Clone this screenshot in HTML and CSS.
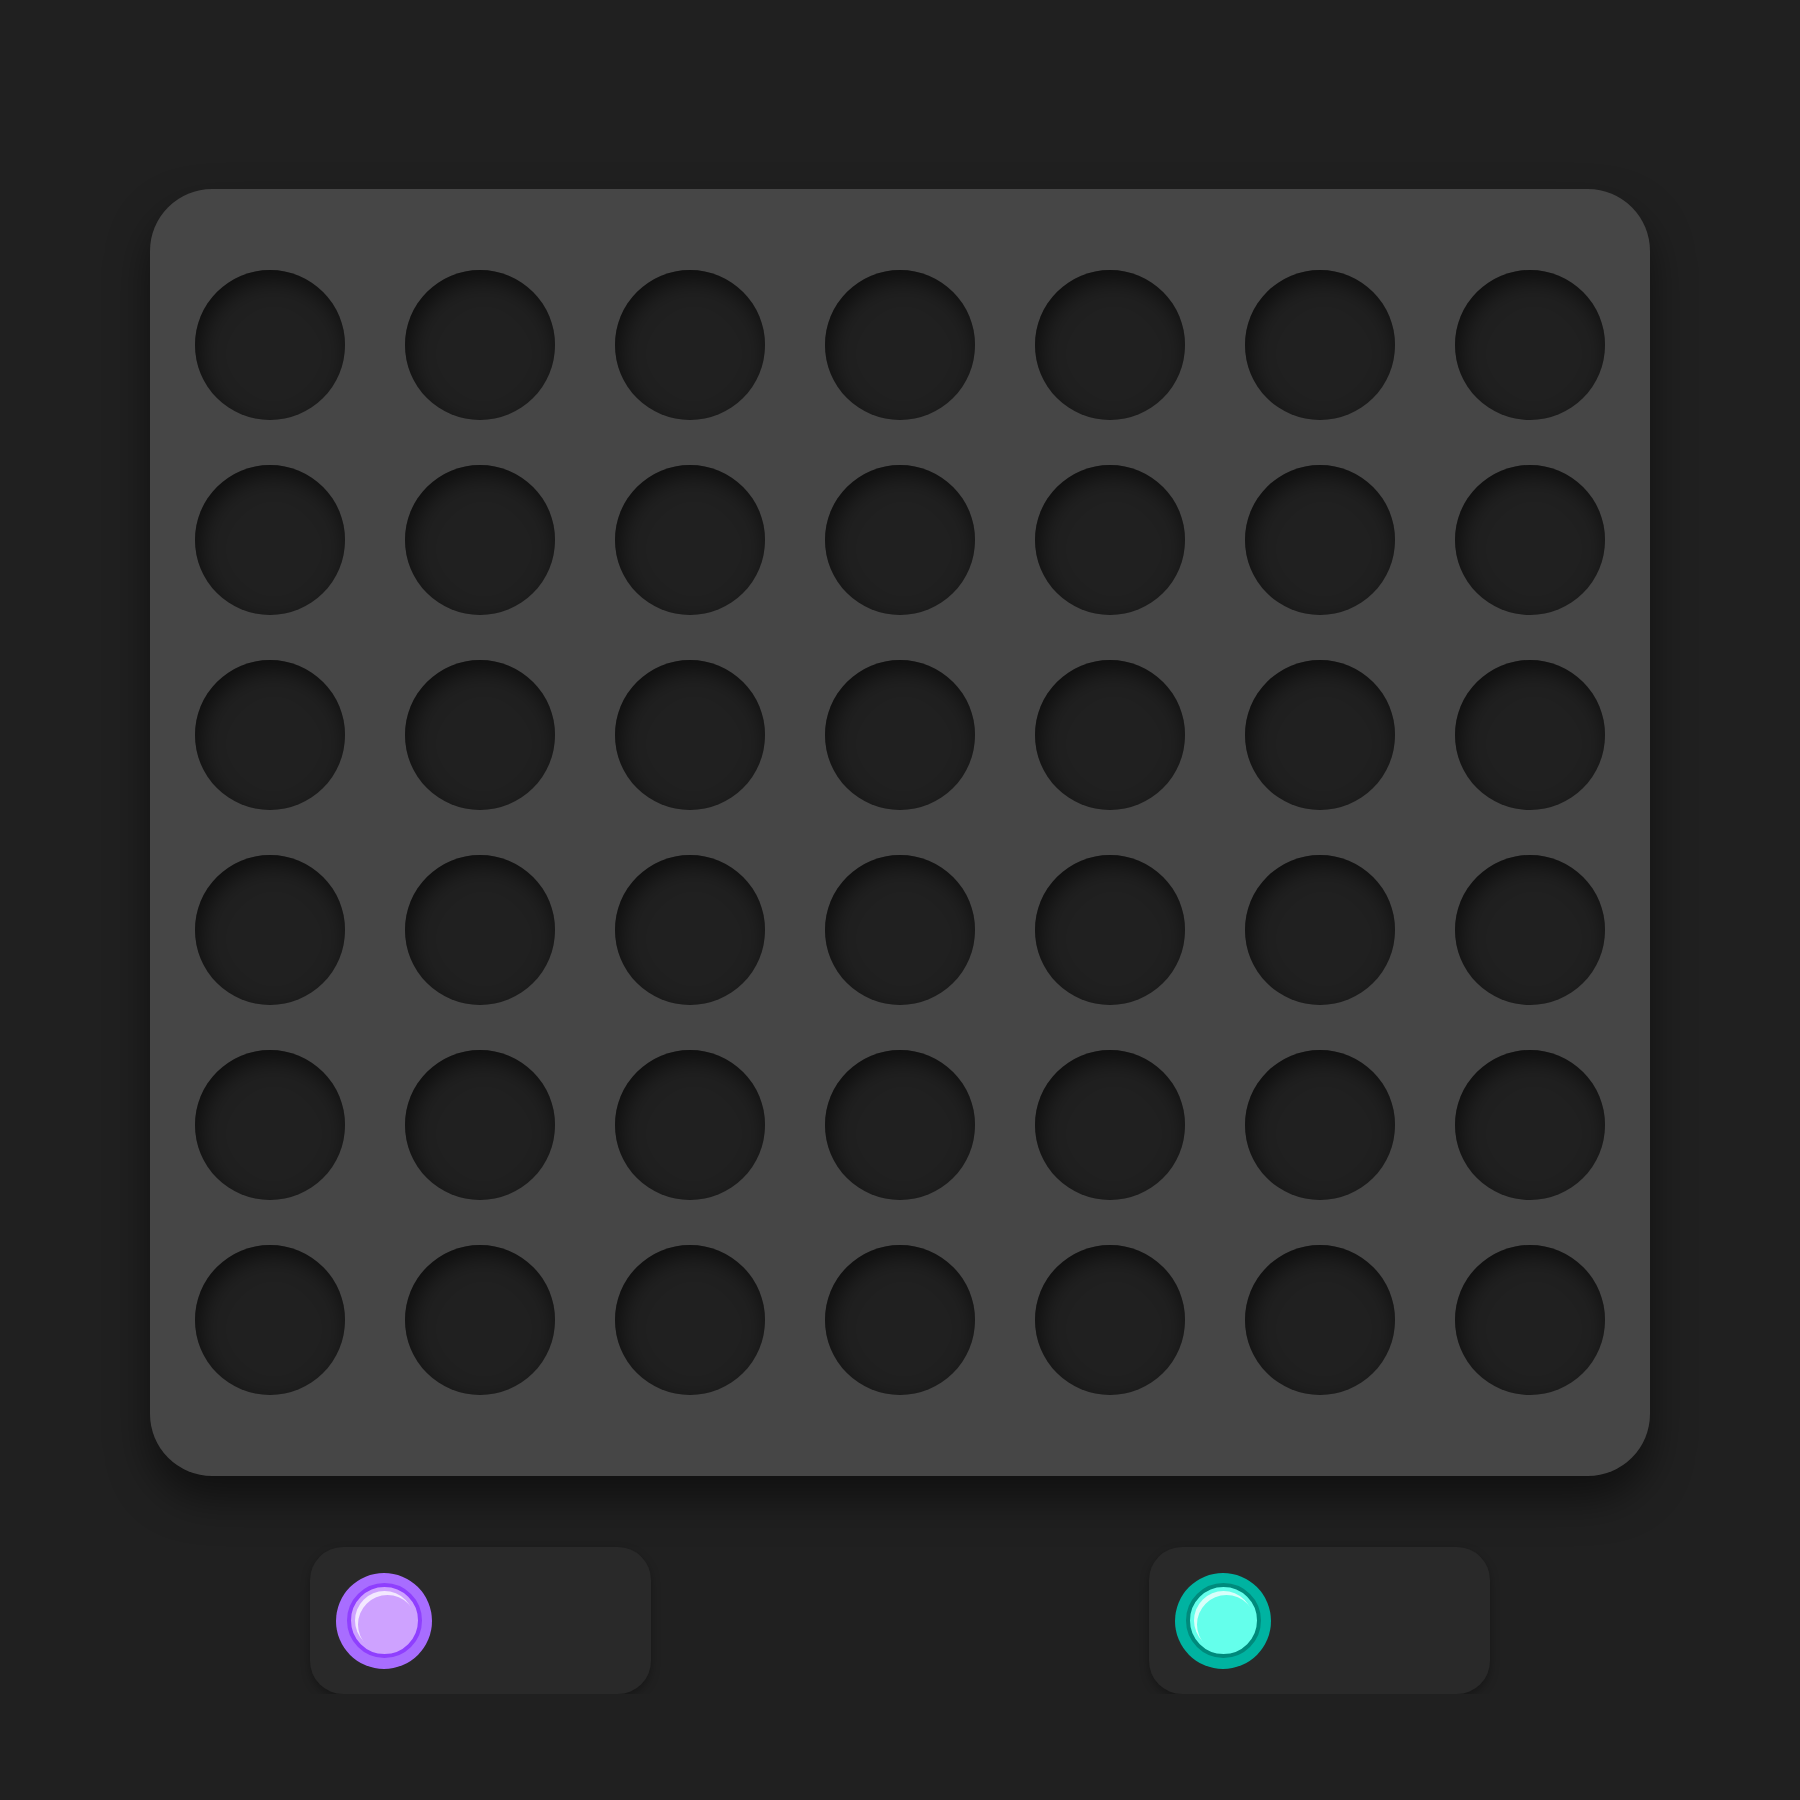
FILE: index.html
```html
<!DOCTYPE html>
<html lang="en">
<head>
<meta charset="utf-8">
<title>Connect Four</title>
<link rel="stylesheet" href="styles.css">
</head>
<body>
<main class="game">
  <div class="board">
    <div class="hole"></div><div class="hole"></div><div class="hole"></div><div class="hole"></div><div class="hole"></div><div class="hole"></div><div class="hole"></div>
    <div class="hole"></div><div class="hole"></div><div class="hole"></div><div class="hole"></div><div class="hole"></div><div class="hole"></div><div class="hole"></div>
    <div class="hole"></div><div class="hole"></div><div class="hole"></div><div class="hole"></div><div class="hole"></div><div class="hole"></div><div class="hole"></div>
    <div class="hole"></div><div class="hole"></div><div class="hole"></div><div class="hole"></div><div class="hole"></div><div class="hole"></div><div class="hole"></div>
    <div class="hole"></div><div class="hole"></div><div class="hole"></div><div class="hole"></div><div class="hole"></div><div class="hole"></div><div class="hole"></div>
    <div class="hole"></div><div class="hole"></div><div class="hole"></div><div class="hole"></div><div class="hole"></div><div class="hole"></div><div class="hole"></div>
  </div>
  <div class="players">
    <div class="player">
      <div class="chip chip-purple"><div class="chip-face"></div></div>
    </div>
    <div class="player">
      <div class="chip chip-teal"><div class="chip-face"></div></div>
    </div>
  </div>
</main>
</body>
</html>
```

FILE: styles.css
```css
html, body {
  margin: 0;
  padding: 0;
  background: #202020;
  font-family: "Liberation Sans", Arial, sans-serif;
}

.game {
  padding-top: 189px;
}

.board {
  width: 1500px;
  box-sizing: border-box;
  margin: 0 auto;
  display: grid;
  grid-template-columns: repeat(7, 150px);
  gap: 45px 60px;
  padding: 81px 45px;
  background: #464646;
  border-radius: 62px;
  box-shadow: 0 22px 40px rgba(0, 0, 0, 0.5);
}

.hole {
  width: 150px;
  height: 150px;
  border-radius: 50%;
  background: #202020;
  box-shadow: inset 4px 9px 22px rgba(0, 0, 0, 0.6);
}

.players {
  width: 1180px;
  margin: 71px auto 0;
  display: flex;
  justify-content: space-between;
}

.player {
  width: 341px;
  height: 147px;
  box-sizing: border-box;
  padding-left: 26px;
  display: flex;
  align-items: center;
  background: #292929;
  border-radius: 33px;
  box-shadow: 0 4px 10px rgba(0, 0, 0, 0.3);
}

.chip {
  width: 96px;
  height: 96px;
  border-radius: 50%;
  display: flex;
  align-items: center;
  justify-content: center;
}

.chip-face {
  width: 75px;
  height: 75px;
  box-sizing: border-box;
  border-radius: 50%;
  border: 4px solid;
  position: relative;
}

.chip-face::after {
  content: "";
  position: absolute;
  left: 4px;
  top: 4px;
  width: 59px;
  height: 59px;
  border-radius: 50%;
  box-shadow: inset 3px 4px 0 rgba(255, 255, 255, 0.75);
}

.chip-purple {
  background: #a86dff;
}

.chip-purple .chip-face {
  border-color: #8f3ffe;
  background: #cea2ff;
}

.chip-teal {
  background: #00b3a1;
}

.chip-teal .chip-face {
  border-color: #008a7c;
  background: #64ffeb;
}
```
